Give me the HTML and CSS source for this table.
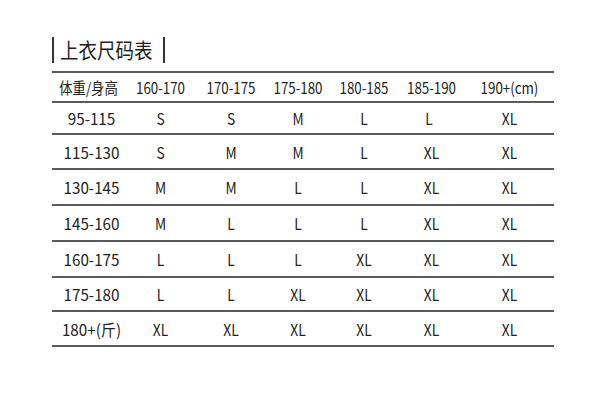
FILE: index.html
```html
<!DOCTYPE html>
<html lang="zh">
<head>
<meta charset="utf-8">
<link rel="stylesheet" href="styles.css">
</head>
<body>
<div class="page">
  <div class="title"><span class="bar"></span><span class="title-text">上衣尺码表</span><span class="bar bar-end"></span></div>
  <div class="table">
    <div class="row head r0"><div>体重/身高</div><div>160-170</div><div>170-175</div><div>175-180</div><div>180-185</div><div>185-190</div><div>190+(cm)</div></div>
    <div class="row r1"><div>95-115</div><div>S</div><div>S</div><div>M</div><div>L</div><div class="c6">L</div><div>XL</div></div>
    <div class="row r2"><div>115-130</div><div>S</div><div>M</div><div>M</div><div>L</div><div>XL</div><div>XL</div></div>
    <div class="row r3"><div>130-145</div><div>M</div><div>M</div><div>L</div><div>L</div><div>XL</div><div>XL</div></div>
    <div class="row r4"><div>145-160</div><div>M</div><div>L</div><div>L</div><div>L</div><div>XL</div><div>XL</div></div>
    <div class="row r5"><div>160-175</div><div>L</div><div>L</div><div>L</div><div>XL</div><div>XL</div><div>XL</div></div>
    <div class="row r6"><div>175-180</div><div>L</div><div>L</div><div>XL</div><div>XL</div><div>XL</div><div>XL</div></div>
    <div class="row r7 last"><div>180+(斤)</div><div>XL</div><div>XL</div><div>XL</div><div>XL</div><div>XL</div><div>XL</div></div>
  </div>
</div>
</body>
</html>
```
FILE: styles.css
```css
html, body {
  margin: 0;
  padding: 0;
  background: #ffffff;
}
.page {
  padding: 36px 0 0 52px;
  font-family: "Noto Sans CJK SC", "Noto Sans", sans-serif;
  color: #222222;
}
.title {
  display: flex;
  align-items: center;
  height: 27px;
  margin-bottom: 8px;
}
.bar {
  display: inline-block;
  width: 2px;
  height: 26px;
  background: #333333;
}
.title-text {
  display: inline-block;
  font-size: 21px;
  line-height: 27px;
  margin-left: 6px;
  margin-right: -13px;
  color: #1e1e1e;
  transform: scaleX(0.88);
  transform-origin: left center;
}
.bar-end {
  margin-left: 11px;
}
.table {
  width: 502px;
}
.row {
  display: grid;
  grid-template-columns: 73px 71px 70px 64px 68px 67px 89px;
  align-items: center;
  border-top: 2px solid #5a5a5a;
  box-sizing: border-box;
  font-size: 16px;
  line-height: 20px;
}
.row.head {
  font-size: 15.5px;
}
.row > div {
  text-align: center;
  white-space: nowrap;
  transform: scaleX(0.86);
}
.row:not(.head) > div:first-child {
  transform: translateX(3px) scaleX(0.95);
}
.row.last {
  border-bottom: 2px solid #5a5a5a;
}
.r0 { height: 30px; }
.r1 { height: 32px; }
.r2 { height: 35px; }
.r3 { height: 36px; }
.r4 { height: 36px; }
.r5 { height: 36px; }
.r6 { height: 34px; }
.r7 { height: 37px; }
.c6 { padding-right: 6px; }
```
